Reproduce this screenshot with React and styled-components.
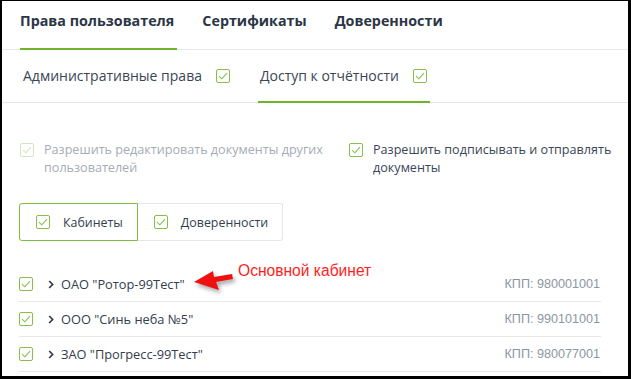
import React from 'react';
import styled, { createGlobalStyle } from 'styled-components';

const GlobalStyle = createGlobalStyle`
  * { box-sizing: border-box; }
  body {
    margin: 0;
    background: #000;
    font-family: "Open Sans", "DejaVu Sans", sans-serif;
  }
`;

const Frame = styled.div`
  width: 631px;
  height: 379px;
  padding: 1px 3px 3px 2px;
  background: #000;
`;

const Panel = styled.div`
  width: 626px;
  height: 375px;
  background: #fff;
  overflow: hidden;
`;

const Tabs = styled.div`
  display: flex;
  gap: 25px;
  height: 49px;
  padding-left: 18px;
  border-bottom: 1px solid #e6e9ee;
`;

const Tab = styled.div`
  padding: 10px 3px 0 0;
  margin-bottom: -1px;
  font-size: 14.3px;
  line-height: 20px;
  font-weight: 700;
  color: #2b3646;
  border-bottom: 2px solid ${p => (p.$active ? '#6fb52c' : 'transparent')};
`;

const SubTabs = styled.div`
  display: flex;
  gap: 25px;
  height: 53px;
  padding-left: 19px;
  border-bottom: 1px solid #e3e5e8;
`;

const SubTab = styled.div`
  display: flex;
  align-items: center;
  gap: 14px;
  padding: 0 3px 0 2px;
  margin-bottom: -1px;
  font-size: 14px;
  line-height: 20px;
  color: #3a4556;
  border-bottom: 2px solid ${p => (p.$active ? '#6fb52c' : 'transparent')};
`;

const Body = styled.div`
  padding: 0 27px 0 17px;
`;

const Options = styled.div`
  display: grid;
  grid-template-columns: 330px 1fr;
  margin-top: 38px;
  margin-right: -20px;
`;

const Option = styled.label`
  display: flex;
  align-items: flex-start;
  gap: 10px;
  padding-left: ${p => (p.$first ? '1px' : '0')};
  font-size: 12.6px;
  line-height: 18px;
  color: ${p => (p.$disabled ? '#a5acb5' : '#3a4556')};
`;

const OptionText = styled.span`
  width: ${p => p.$w}px;
`;

const Box = styled.span`
  flex: none;
  display: inline-flex;
  align-items: center;
  justify-content: center;
  width: 14px;
  height: 14px;
  margin-top: ${p => p.$mt || 0}px;
  border: 1.5px solid ${p => (p.$disabled ? '#d3e6bd' : '#86c04a')};
  border-radius: 2px;
  background: #fff;
`;

const Segmented = styled.div`
  display: inline-flex;
  margin-top: 26px;
`;

const Segment = styled.div`
  display: flex;
  align-items: center;
  gap: 13px;
  height: 38px;
  padding: 0 14px 0 16px;
  font-size: 12.4px;
  color: #333f50;
  border: 1px solid ${p => (p.$active ? '#7dbb43' : '#e3e6ea')};
  border-left-width: ${p => (p.$active ? '1px' : '0')};
  border-radius: ${p => (p.$active ? '3px 0 0 3px' : '0 3px 3px 0')};
`;

const List = styled.div`
  position: relative;
  margin-top: 26px;
`;

const Row = styled.div`
  display: flex;
  align-items: center;
  height: 35px;
  border-bottom: 1px solid #e6e8eb;
`;

const Chevron = styled.svg`
  margin-left: 15px;
  flex: none;
`;

const OrgName = styled.span`
  margin-left: 7px;
  font-size: 12.8px;
  color: #333d4c;
`;

const Kpp = styled.span`
  margin-left: auto;
  padding-right: 1px;
  font-family: "Liberation Sans", Arial, sans-serif;
  font-size: 12.6px;
  color: #8c96a2;
`;

const Note = styled.span`
  position: absolute;
  left: 219px;
  top: -5px;
  font-family: "Liberation Sans", Arial, sans-serif;
  font-size: 15.6px;
  line-height: 17px;
  color: #ff1e1e;
  white-space: nowrap;
`;

const Arrow = styled.svg`
  position: absolute;
  left: 169px;
  top: -2px;
  overflow: visible;
  filter: drop-shadow(2px 3px 2px rgba(0, 0, 0, 0.35));
`;

const Check = ({ disabled, mt }) => (
  <Box $disabled={disabled} $mt={mt}>
    <svg width="10" height="8" viewBox="0 0 10 8">
      <path
        d="M1 4.2 L3.8 6.8 L9 1.2"
        fill="none"
        stroke={disabled ? '#d3e6bd' : '#86c04a'}
        strokeWidth="1.1"
      />
    </svg>
  </Box>
);

const orgs = [
  { name: 'ОАО "Ротор-99Тест"', kpp: '980001001' },
  { name: 'ООО "Синь неба №5"', kpp: '990101001' },
  { name: 'ЗАО "Прогресс-99Тест"', kpp: '980077001' },
];

export default function App() {
  return (
    <Frame>
      <GlobalStyle />
      <Panel>
        <Tabs>
          <Tab $active>Права пользователя</Tab>
          <Tab>Сертификаты</Tab>
          <Tab>Доверенности</Tab>
        </Tabs>
        <SubTabs>
          <SubTab>
            Административные права <Check />
          </SubTab>
          <SubTab $active>
            Доступ к отчётности <Check />
          </SubTab>
        </SubTabs>
        <Body>
          <Options>
            <Option $first $disabled>
              <Check disabled mt={2} />
              <OptionText $w={285}>Разрешить редактировать документы других пользователей</OptionText>
            </Option>
            <Option>
              <Check mt={2} />
              <OptionText $w={245}>Разрешить подписывать и отправлять документы</OptionText>
            </Option>
          </Options>
          <Segmented>
            <Segment $active>
              <Check />
              Кабинеты
            </Segment>
            <Segment>
              <Check />
              Доверенности
            </Segment>
          </Segmented>
          <List>
            {orgs.map(o => (
              <Row key={o.kpp}>
                <Check />
                <Chevron width="6" height="9" viewBox="0 0 6 9">
                  <path d="M1.2 1 L4.6 4.5 L1.2 8" fill="none" stroke="#2f3a4a" strokeWidth="1.7" />
                </Chevron>
                <OrgName>{o.name}</OrgName>
                <Kpp>КПП: {o.kpp}</Kpp>
              </Row>
            ))}
            <Arrow width="50" height="30" viewBox="0 0 50 30">
              <polygon
                points="6,17 25,6 26,12 44,9 45,14 28,17 31,25"
                fill="#f01010"
              />
            </Arrow>
            <Note>Основной кабинет</Note>
          </List>
        </Body>
      </Panel>
    </Frame>
  );
}
